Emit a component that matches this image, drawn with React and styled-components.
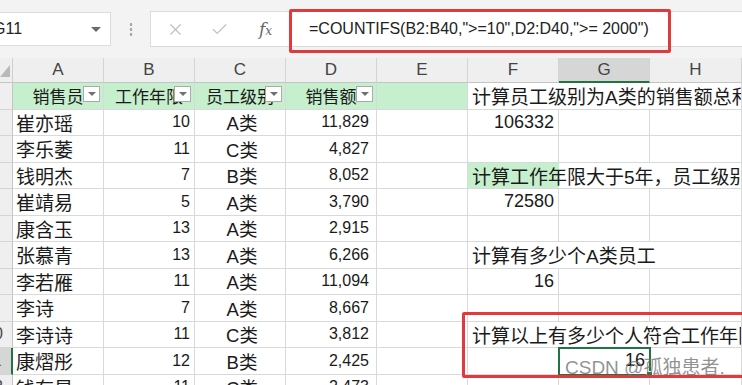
import React from 'react';
import styled, { createGlobalStyle } from 'styled-components';
import { X, Check } from 'lucide-react';

const GREEN_FILL = '#c6efce';
const EXCEL_GREEN = '#217346';
const RED = '#e03a3c';

const headers = [
  { label: '销售员' },
  { label: '工作年限' },
  { label: '员工级别' },
  { label: '销售额' },
];

const rows = [
  { n: 2, name: '崔亦瑶', years: 10, level: 'A类', sales: '11,829', value: '106332' },
  { n: 3, name: '李乐萎', years: 11, level: 'C类', sales: '4,827' },
  { n: 4, name: '钱明杰', years: 7, level: 'B类', sales: '8,052', note: '计算工作年限大于5年，员工级别为A类的销售额总和', tint: true },
  { n: 5, name: '崔靖易', years: 5, level: 'A类', sales: '3,790', value: '72580' },
  { n: 6, name: '康含玉', years: 13, level: 'A类', sales: '2,915' },
  { n: 7, name: '张慕青', years: 13, level: 'A类', sales: '6,266', note: '计算有多少个A类员工' },
  { n: 8, name: '李若雁', years: 11, level: 'A类', sales: '11,094', value: '16' },
  { n: 9, name: '李诗', years: 7, level: 'A类', sales: '8,667' },
  { n: 10, name: '李诗诗', years: 11, level: 'C类', sales: '3,812', note: '计算以上有多少个人符合工作年限大于等于10年，销售额大于等于2000' },
  { n: 11, name: '康熠彤', years: 12, level: 'B类', sales: '2,425', selected: '16' },
  { n: 12, name: '钱有星', years: 11, level: 'C类', sales: '2,473' },
];

export default function App() {
  return (
    <Page>
      <GlobalStyle />
      <Toolbar>
        <NameBox>
          <span>G11</span>
          <Caret />
        </NameBox>
        <Dots />
        <FormulaBox>
          <IconSlot><X size={19} strokeWidth={1.4} /></IconSlot>
          <IconSlot><Check size={19} strokeWidth={1.4} /></IconSlot>
          <IconSlot><Fx>f<small>x</small></Fx></IconSlot>
          <FormulaText>=COUNTIFS(B2:B40,"&gt;=10",D2:D40,"&gt;= 2000")</FormulaText>
        </FormulaBox>
      </Toolbar>

      <Sheet>
        <Corner>
          <svg width="13" height="25" viewBox="0 0 13 25">
            <polygon points="0,19 10,7 10,19" fill="#b9b9b9" />
          </svg>
        </Corner>
        {['A', 'B', 'C', 'D', 'E', 'F', 'G', 'H'].map((c) => (
          <ColHead key={c} $active={c === 'G'}>{c}</ColHead>
        ))}

        <RowHead><Num>1</Num></RowHead>
        {headers.map((h) => (
          <HeadCell key={h.label}>
            {h.label}
            <FilterButton />
          </HeadCell>
        ))}
        <Cell $fill />
        <Cell $span={3} $size={19}>计算员工级别为A类的销售额总和</Cell>

        {rows.map((r) => (
          <React.Fragment key={r.n}>
            <RowHead $active={!!r.selected}><Num>{r.n}</Num></RowHead>
            <Cell $size={19} $pad="0 0 0 3px">{r.name}</Cell>
            <Cell $align="right">{r.years}</Cell>
            <Cell $align="center" $size={18.5}>{r.level}</Cell>
            <Cell $align="right" $pad="0 7px 0 0">{r.sales}</Cell>
            <Cell />
            {r.note ? (
              <Cell $span={3} $size={19} $tint={r.tint}>{r.note}</Cell>
            ) : (
              <>
                <Cell $align="right" $size={18}>{r.value}</Cell>
                {r.selected ? (
                  <Selected $align="right" $size={18}>
                    {r.selected}
                    <Handle />
                  </Selected>
                ) : (
                  <Cell />
                )}
                <Cell />
              </>
            )}
          </React.Fragment>
        ))}
      </Sheet>

      <Callout $top={9} $left={289} $width={382} $height={44} />
      <Callout $top={312} $left={462} $width={300} $height={66} />
      <Watermark>CSDN @孤独患者.</Watermark>
    </Page>
  );
}

const GlobalStyle = createGlobalStyle`
  html, body {
    margin: 0;
    padding: 0;
    background: #fff;
  }
  body {
    font-family: "Liberation Sans", "Noto Sans CJK SC", sans-serif;
    color: #1a1a1a;
  }
`;

const Page = styled.div`
  position: relative;
  width: 742px;
  height: 385px;
  overflow: hidden;
  background: #fff;
`;

const Toolbar = styled.div`
  display: flex;
  align-items: center;
  height: 58px;
  background: #f3f3f3;
`;

const NameBox = styled.div`
  display: flex;
  align-items: center;
  justify-content: space-between;
  box-sizing: border-box;
  width: 121px;
  height: 34px;
  margin-left: -10px;
  padding: 0 9px 0 2px;
  background: #fff;
  border: 1px solid #dcdcdc;
  font-size: 16px;
  color: #222;
`;

const Caret = styled.span`
  width: 0;
  height: 0;
  border-left: 5px solid transparent;
  border-right: 5px solid transparent;
  border-top: 5px solid #6a6a6a;
`;

const Dots = styled.div`
  width: 4px;
  height: 15px;
  margin: 0 17px 0 18px;
  background: radial-gradient(circle, #a9a9a9 1.2px, transparent 1.6px) 0 0 / 4px 5px repeat-y;
`;

const FormulaBox = styled.div`
  flex: 1;
  display: flex;
  align-items: center;
  height: 34px;
  margin-right: -6px;
  padding-left: 2px;
  background: #fff;
  border: 1px solid #dcdcdc;
`;

const IconSlot = styled.div`
  display: flex;
  align-items: center;
  justify-content: center;
  width: 44px;
  height: 100%;
  color: #bdbdbd;
`;

const Fx = styled.span`
  font-family: "DejaVu Serif", "Liberation Serif", serif;
  font-style: italic;
  font-size: 17px;
  color: #666;
  margin-left: 5px;

  small {
    font-size: 12px;
  }
`;

const FormulaText = styled.span`
  margin-left: 24px;
  font-size: 16px;
  color: #222;
  white-space: nowrap;
`;

const Sheet = styled.div`
  display: grid;
  grid-template-columns: 13px repeat(7, 91px) 1fr;
  grid-template-rows: 25px;
  grid-auto-rows: 26.5px;
`;

const Corner = styled.div`
  background: #efefef;
  border-right: 1px solid #cfcfcf;
  border-bottom: 1px solid #c4c4c4;
  box-sizing: border-box;
  overflow: hidden;
`;

const ColHead = styled.div`
  display: flex;
  align-items: center;
  justify-content: center;
  box-sizing: border-box;
  background: ${(p) => (p.$active ? '#d6d6d6' : '#efefef')};
  border-right: 1px solid #d4d4d4;
  border-bottom: ${(p) => (p.$active ? `2px solid ${EXCEL_GREEN}` : '1px solid #c4c4c4')};
  font-size: 17px;
  color: #444;
`;

const RowHead = styled.div`
  display: flex;
  justify-content: flex-end;
  align-items: center;
  box-sizing: border-box;
  overflow: hidden;
  background: ${(p) => (p.$active ? '#d6d6d6' : '#efefef')};
  border-right: ${(p) => (p.$active ? `2px solid ${EXCEL_GREEN}` : '1px solid #c4c4c4')};
  border-bottom: 1px solid #d4d4d4;
`;

const Num = styled.span`
  flex: 0 0 36px;
  text-align: center;
  font-size: 16px;
  color: #444;
`;

const Cell = styled.div`
  grid-column: span ${(p) => p.$span || 1};
  display: flex;
  align-items: center;
  justify-content: ${(p) =>
    p.$align === 'right' ? 'flex-end' : p.$align === 'center' ? 'center' : 'flex-start'};
  box-sizing: border-box;
  min-width: 0;
  padding: ${(p) => p.$pad || (p.$align === 'right' ? '0 4px 0 0' : '0 0 0 4px')};
  overflow: hidden;
  white-space: nowrap;
  border-right: 1px solid #d9d9d9;
  border-bottom: 1px solid #d9d9d9;
  background: ${(p) =>
    p.$fill
      ? GREEN_FILL
      : p.$tint
      ? `linear-gradient(to right, ${GREEN_FILL} 91px, #fff 91px)`
      : '#fff'};
  font-size: ${(p) => p.$size || 16}px;
  color: #1a1a1a;
`;

const HeadCell = styled(Cell)`
  position: relative;
  justify-content: center;
  padding: 0;
  background: ${GREEN_FILL};
  font-size: 17px;
`;

const FilterButton = styled.span`
  position: absolute;
  top: 3px;
  right: 3px;
  width: 17px;
  height: 16px;
  box-sizing: border-box;
  background: #fff;
  border: 1px solid #ababab;

  &::after {
    content: '';
    position: absolute;
    left: 4px;
    top: 5px;
    border-left: 4px solid transparent;
    border-right: 4px solid transparent;
    border-top: 4px solid #707070;
  }
`;

const Selected = styled(Cell)`
  position: relative;
  overflow: visible;
  outline: 2px solid ${EXCEL_GREEN};
  outline-offset: -1px;
`;

const Handle = styled.span`
  position: absolute;
  right: -4px;
  bottom: -4px;
  width: 5px;
  height: 5px;
  background: ${EXCEL_GREEN};
  border: 1px solid #fff;
`;

const Callout = styled.div`
  position: absolute;
  top: ${(p) => p.$top}px;
  left: ${(p) => p.$left}px;
  width: ${(p) => p.$width}px;
  height: ${(p) => p.$height}px;
  box-sizing: border-box;
  border: 3px solid ${RED};
  border-radius: 2px;
  pointer-events: none;
`;

const Watermark = styled.div`
  position: absolute;
  left: 565px;
  top: 352px;
  font-size: 19px;
  color: rgba(110, 110, 110, 0.75);
  white-space: nowrap;
  pointer-events: none;
`;
